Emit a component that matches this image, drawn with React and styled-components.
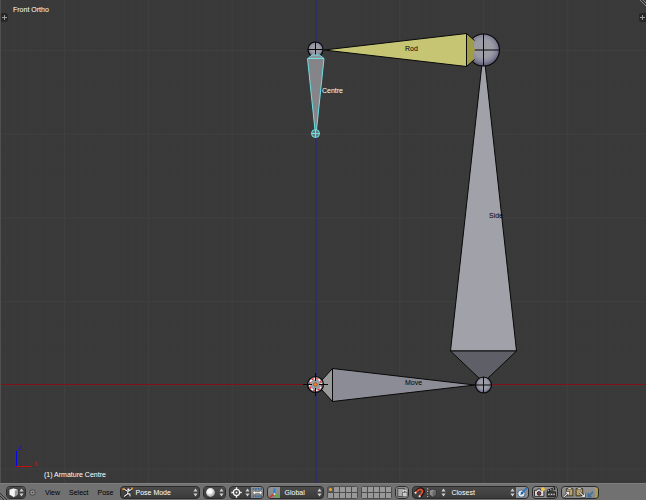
import React from 'react';
import styled, { createGlobalStyle, css } from 'styled-components';

const GlobalStyle = createGlobalStyle`
  * {
    box-sizing: border-box;
  }
  html, body, #root {
    height: 100%;
    margin: 0;
  }
  body {
    background: #393939;
    font-family: "Liberation Sans", Arial, sans-serif;
    font-size: 7px;
    line-height: 8px;
    overflow: hidden;
  }
  button, select {
    font: inherit;
  }
`;

const Editor = styled.div`
  display: flex;
  flex-direction: column;
  height: 100%;
`;

const Viewport = styled.main`
  position: relative;
  flex: 1;
  min-height: 0;
  border-left: 1px solid #505050;
`;

const Scene = styled.svg`
  display: block;
  width: 100%;
  height: 100%;

  text {
    font-size: 7px;
  }
`;

const Overlay = styled.div`
  position: absolute;
  left: ${(p) => p.$left}px;
  ${(p) => (p.$bottom ? 'bottom: 4px;' : 'top: 6px;')}
  color: #fff;
`;

const RegionTab = styled.button`
  position: absolute;
  top: 13px;
  ${(p) => p.$side}: 0;
  display: flex;
  align-items: center;
  justify-content: center;
  width: 7px;
  height: 9px;
  padding: 0;
  border: none;
  border-radius: ${(p) => (p.$side === 'left' ? '0 3px 3px 0' : '3px 0 0 3px')};
  background: #262626;
`;

const CornerGrip = styled.svg`
  position: absolute;
  top: 0;
  right: 0;
`;

const Header = styled.header`
  position: relative;
  display: flex;
  align-items: center;
  gap: 3px;
  height: 17px;
  padding: 1px 6px 0;
  border-top: 1px solid #7f7f7f;
  background: #717171;
`;

const HeaderGrip = styled.svg`
  position: absolute;
  left: 0;
  bottom: 0;
`;

const Menus = styled.nav`
  display: flex;
  align-items: center;
  gap: 9px;
  margin-right: 4px;
`;

const MenuButton = styled.button`
  display: flex;
  padding: 0;
  border: none;
  background: none;
  color: #000;
`;

const Group = styled.div`
  display: flex;
  flex-shrink: 0;
  height: 13px;
  border: 1px solid #2b2b2b;
  border-radius: 4px;
  overflow: hidden;
  background: #2b2b2b;
`;

const dark = css`
  background: linear-gradient(#4b4b4b, #3b3b3b);
`;

const light = css`
  background: linear-gradient(#939393, #858585);
`;

const IconButton = styled.button`
  display: flex;
  align-items: center;
  justify-content: ${(p) => (p.$menu ? 'space-between' : 'center')};
  width: ${(p) => p.$width || 12}px;
  height: 11px;
  padding: 0 ${(p) => (p.$menu ? 1 : 0)}px;
  border: none;
  ${(p) => (p.$light ? light : dark)}

  svg {
    flex-shrink: 0;
  }
`;

const SelectBox = styled.label`
  display: flex;
  align-items: center;
  position: relative;
  width: ${(p) => p.$width}px;
  height: 11px;
  ${dark}
`;

const Select = styled.select`
  appearance: none;
  width: 100%;
  height: 11px;
  padding: 0 8px 0 ${(p) => p.$indent || 4}px;
  border: none;
  outline: none;
  background: none;
  color: #fff;
`;

const SelectIcon = styled.span`
  position: absolute;
  left: 1px;
  top: 0;
  pointer-events: none;
`;

const SelectArrows = styled.span`
  position: absolute;
  right: 1px;
  top: 0;
  display: flex;
  align-items: center;
  height: 11px;
  pointer-events: none;
`;

const Layers = styled.div`
  display: grid;
  grid-template-columns: repeat(5, 5px);
  grid-auto-rows: 5px;
  gap: 1px;
  padding: 1px;
  border-radius: 3px;
  overflow: hidden;
  background: #4d4d4d;
`;

const Layer = styled.button`
  display: flex;
  padding: 1px;
  border: none;
  background: ${(p) => (p.$active ? '#5c5c5c' : '#999')};
`;

const LayerDot = styled.span`
  width: 3px;
  height: 3px;
  border-radius: 2px;
  background: #f2a531;
`;

const Arrows = () => (
  <svg width="5" height="9" viewBox="0 0 5 9" fill="#cfcfcf">
    <path d="M2.5 0.5L4.6 3.6H0.4zM2.5 8.5L0.4 5.4h4.2z" />
  </svg>
);

const Icon = ({ children, size = 11 }) => (
  <svg width={size} height={size} viewBox="0 0 10 10" fill="none">
    {children}
  </svg>
);

const CubeIcon = () => (
  <Icon>
    <path d="M1 2.2L5 1l4 1.2v4.6L5.2 9.5 1 7z" fill="#f4f4f4" stroke="#222" strokeWidth=".5" />
    <path d="M6.2 3.5L9 2.4v4.4L6.2 8.8z" fill="#999" />
  </Icon>
);

const PoseIcon = () => (
  <svg width="12" height="11" viewBox="0 0 12 11" fill="none">
    <path d="M2 2l3 2h2l3-2M6 4.5L5.5 7 2 9.6M5.8 6.6L8 7v2.6" stroke="#111" strokeWidth="2.4" />
    <path d="M2 2l3 2h2l3-2M6 4.5L5.5 7 2 9.6M5.8 6.6L8 7v2.6" stroke="#eee" strokeWidth="1.2" />
    <circle cx="6.4" cy="2.6" r="1.1" fill="#fff" />
    <path d="M0.5 1h2v2h-2zM9 .5h2v2H9z" fill="#f08a24" />
  </svg>
);

const ShadingIcon = () => (
  <Icon>
    <circle cx="5" cy="5" r="4" fill="url(#solid)" />
  </Icon>
);

const PivotIcon = () => (
  <Icon>
    <circle cx="5" cy="5" r="2.8" stroke="#f5f5f5" strokeWidth="1.1" />
    <path d="M5 .3v2.4M5 7.3v2.4M.3 5h2.4M7.3 5h2.4" stroke="#f5f5f5" strokeWidth="1.3" />
    <circle cx="5" cy="5" r=".8" fill="#fff" />
  </Icon>
);

const CentersIcon = () => (
  <Icon>
    <path d="M.5 1.8h9M.5 8.5h9" stroke="#30679f" strokeWidth="1.6" strokeDasharray="1.4 1" />
    <path d="M.6 5.2L3 2.9v1.5h4V2.9l2.4 2.3L7 7.5V6H3v1.5z" fill="#fff" stroke="#333" strokeWidth=".4" />
  </Icon>
);

const AxesIcon = () => (
  <svg width="11" height="10" viewBox="0 0 11 10" fill="none" strokeWidth="1.6">
    <path d="M5.5 .5v5.5" stroke="#2c7fd8" strokeWidth="2" />
    <path d="M5.5 6L1 9" stroke="#d33a25" />
    <path d="M5.5 6L10 9" stroke="#54b52a" />
    <circle cx="5.5" cy="6" r="1" fill="#ddd" />
  </svg>
);

const LockIcon = () => (
  <Icon>
    <path d="M.7 1.3h6v7.4h-6z" fill="#aaa" stroke="#333" strokeWidth=".7" />
    <path d="M5.8 5V3.6q1.5-1.4 2.6 0V5" stroke="#ddd" />
    <path d="M5 4.8h4.3v4H5z" fill="#ccc" stroke="#333" strokeWidth=".5" />
  </Icon>
);

const MagnetIcon = () => (
  <Icon>
    <path d="M1 5.2L4 2.4c3-2.2 5.8 1 3.6 3.6L5.2 9" stroke="#201010" strokeWidth="2.7" />
    <path d="M1.3 5.3L4 2.8c2.5-1.8 4.8.5 3 2.8L5 8.5" stroke="#db5132" strokeWidth="1.6" />
    <path d="M.8 5.7l1.2-1M4.6 9l.9-1.2" stroke="#eee" strokeWidth="1.8" />
  </Icon>
);

const SnapIcon = () => (
  <Icon>
    <path d="M3 3l3-1 3 1v4L6 9 3 7z" fill="#8c8c8c" stroke="#252525" strokeWidth=".5" />
    <path d="M1.5 1.2v8" stroke="#bbb" strokeDasharray="1 1.3" />
    <path d="M6 4.3l3-1.2V7L6 8.7z" fill="#666" />
  </Icon>
);

const TargetIcon = () => (
  <Icon>
    <circle cx="4" cy="6" r="3.3" fill="#e4ecf4" stroke="#40658c" strokeWidth=".8" />
    <path d="M4 6l5-5.2" stroke="#2f77bd" strokeWidth="1.8" />
    <path d="M3 7.2l1-3 2 2z" fill="#285b90" />
  </Icon>
);

const CameraIcon = () => (
  <Icon>
    <path d="M.5 3h2l.6-1.2h2.6L6.2 3H9v5.5H.5z" fill="#ddd" stroke="#222" strokeWidth=".8" />
    <circle cx="4.6" cy="5.8" r="1.7" fill="#834" stroke="#222" strokeWidth=".8" />
    <circle cx="8.1" cy="2" r="1.7" fill="#f7c53b" />
  </Icon>
);

const ClapperIcon = () => (
  <Icon>
    <path d="M1 4.4h7.7V9H1z" fill="#444" stroke="#1b1b1b" strokeWidth=".8" />
    <path d="M1 3.8L8.5 1.2" stroke="#1b1b1b" strokeWidth="2.3" />
    <path d="M1.5 3.6l7-2.4M2 6.7h6" stroke="#ccc" strokeWidth="1" strokeDasharray="1.3 1.1" />
  </Icon>
);

const ClipboardIcon = ({ flip }) => (
  <Icon>
    <path d={flip ? 'M1 1.5h6V8H1z' : 'M3 1.5h6V8H3z'} fill="#b8a069" stroke="#382d18" strokeWidth=".8" />
    <path d={flip ? 'M2.500 .6h3v1.7h-3z' : 'M4.500 .6h3v1.7h-3z'} fill="#ddd" stroke="#333" strokeWidth=".4" />
    <path d={flip ? 'M4 4.5l4.2 4M8.5 5.8v3h-3' : 'M.6 9.2L5 5M2.7 4.8h2.6v2.6'} stroke="#222" strokeWidth="2" />
    <path d={flip ? 'M4 4.5l4.2 4M8.5 5.8v3h-3' : 'M.6 9.2L5 5M2.7 4.8h2.6v2.6'} stroke="#eee" />
  </Icon>
);

const FlipIcon = () => (
  <Icon>
    <path d="M1.2 8.8l4.3-4.5M1.2 5.5v3.3h3" stroke="#3f709c" strokeWidth="1.4" />
    <path d="M8.4 1v8.5" stroke="#c6a92f" strokeWidth="1.8" strokeDasharray="1.5 .8" />
  </Icon>
);

function Joint({ x, y, r, cross = true }) {
  return (
    <g stroke="#080808">
      <circle cx={x} cy={y} r={r} fill="url(#joint)" strokeWidth="1.2" />
      {cross && <path d={`M${x - r} ${y}h${2 * r}M${x} ${y - r}v${2 * r}`} strokeWidth="1" />}
    </g>
  );
}

// one grid unit is 84px, split in ten
function Armature() {
  return (
    <Scene viewBox="1 0 645 483" preserveAspectRatio="xMidYMid slice" role="img" aria-label="Armature">
      <defs>
        <radialGradient id="joint" cx=".5" cy=".45" r=".55">
          <stop offset="0" stopColor="#9b9ba2" />
          <stop offset=".5" stopColor="#9c9ca6" />
          <stop offset=".75" stopColor="#85859a" />
          <stop offset="1" stopColor="#55556a" />
        </radialGradient>
        <radialGradient id="solid" cx=".4" cy=".35" r=".7">
          <stop offset=".3" stopColor="#fff" />
          <stop offset="1" stopColor="#999" />
        </radialGradient>
        <pattern id="minor" x="64" y="50" width="8.38" height="8.38" patternUnits="userSpaceOnUse">
          <path d="M.5 0v8.38M0 .5h8.38" stroke="#3a3a3a" />
        </pattern>
        <pattern id="major" x="64" y="50" width="83.8" height="83.7" patternUnits="userSpaceOnUse">
          <path d="M.5 0v84M0 .5h84" stroke="#3f3f3f" />
        </pattern>
      </defs>
      <rect width="646" height="484" fill="#393939" />
      <rect width="646" height="484" fill="url(#minor)" />
      <rect width="646" height="484" fill="url(#major)" />
      <path d="M0 384.5h646" stroke="#7e1216" />
      <path d="M316 0v484" stroke="#23238a" />

      {/* Side */}
      <g stroke="#080808" strokeLinejoin="round">
        <path d="M483.5 50L450.5 351h66z" fill="#a1a1aa" />
        <path d="M450.5 351h66L486 380h-5z" fill="#5f5f68" />
      </g>
      <Joint x={483.5} y={50} r={16} />
      <Joint x={483.5} y={385} r={8} />

      {/* Rod */}
      <g stroke="#080808" strokeLinejoin="round">
        <path d="M324 50l142.5-16.5v33z" fill="#c5c573" />
        <path d="M466.5 33.5l8 7-1 4 1.500 5.5-1.500 5 1 4-8 7.5z" fill="#a19d47" stroke="none" />
        <path d="M474.5 40.5l-8-7v33l8-7" fill="none" />
      </g>

      {/* Move */}
      <g stroke="#080808" strokeLinejoin="round">
        <path d="M332.5 368.5v33L475 385z" fill="#8c8c96" />
        <path d="M332.5 368.5l-11 12v9l11 12z" fill="#999" />
      </g>

      {/* Centre */}
      <Joint x={315.5} y={49.5} r={7.5} />
      <g stroke="#6edfe2" strokeLinejoin="round">
        <path d="M308 58.5l4-3.5h7.5l4.5 3.5z" fill="#8d9297" />
        <path d="M307.5 58.5H324L316.5 130h-1.5z" fill="#858589" />
        <circle cx="315.5" cy="133.5" r="4" fill="#607b7e" />
        <path d="M311.5 133.5h8M315.5 129.5v8" />
      </g>

      {/* 3D cursor on the root joint */}
      <Joint x={315.5} y={384.5} r={8} cross={false} />
      <circle cx="315.5" cy="384.5" r="6" fill="none" stroke="#fff" strokeWidth="1.3" />
      <circle cx="315.5" cy="384.5" r="6" fill="none" stroke="#e02a20" strokeWidth="1.3" strokeDasharray="2.35" />
      <path d="M303 384.5h9M319 384.5h9M315.5 373v8M315.5 388v8" stroke="#080808" />
      <circle cx="315.5" cy="384.5" r="1.8" fill="#f08a24" stroke="#59300c" strokeWidth=".5" />

      <text x="405" y="51">Rod</text>
      <text x="322" y="93" fill="#fff">Centre</text>
      <text x="489" y="218">Side</text>
      <text x="405" y="385">Move</text>

      <path d="M16.5 467.5V451" stroke="#0505e0" />
      <path d="M16 466.500h16" stroke="#c01010" />
      <text x="18" y="450" fill="#1515d8">z</text>
      <text x="34" y="466" fill="#d01010">x</text>
    </Scene>
  );
}

const Plus = () => (
  <svg width="5" height="5" viewBox="0 0 5 5" stroke="#9a9a9a">
    <path d="M2.5 0v5M0 2.5h5" />
  </svg>
);

function Dropdown({ label, value, width, icon, indent }) {
  return (
    <SelectBox $width={width}>
      {icon && <SelectIcon>{icon}</SelectIcon>}
      <Select aria-label={label} $indent={indent} defaultValue={value}>
        <option>{value}</option>
      </Select>
      <SelectArrows><Arrows /></SelectArrows>
    </SelectBox>
  );
}

function LayerGrid({ active, start }) {
  return (
    <Layers>
      {Array.from({ length: 10 }, (_, i) => (
        <Layer key={i} aria-label={`Layer ${start + i}`} $active={i === active}>
          {i === active && <LayerDot />}
        </Layer>
      ))}
    </Layers>
  );
}

function App() {
  return (
    <Editor>
      <GlobalStyle />
      <Viewport>
        <Armature />
        <Overlay $left={12}>Front Ortho</Overlay>
        <Overlay $left={43} $bottom>(1) Armature Centre</Overlay>
        <RegionTab $side="left" aria-label="Show tools"><Plus /></RegionTab>
        <RegionTab $side="right" aria-label="Show properties"><Plus /></RegionTab>
        <CornerGrip width="7" height="7" stroke="#858585">
          <path d="M1 0l6 6M4 0l3 3" />
        </CornerGrip>
      </Viewport>
      <Header>
        <Group>
          <IconButton $menu $width={18} aria-label="Editor type"><CubeIcon /><Arrows /></IconButton>
        </Group>
        <Menus>
          <MenuButton aria-label="Collapse menus">
            <svg width="7" height="7" viewBox="0 0 7 7" fill="none" stroke="#303030">
              <circle cx="3.5" cy="3.5" r="2.7" fill="#999" strokeWidth=".8" />
              <circle cx="3.5" cy="3.5" r=".5" />
            </svg>
          </MenuButton>
          <MenuButton>View</MenuButton>
          <MenuButton>Select</MenuButton>
          <MenuButton>Pose</MenuButton>
        </Menus>
        <Group>
          <Dropdown label="Mode" value="Pose Mode" width={78} icon={<PoseIcon />} indent={14} />
        </Group>
        <Group>
          <IconButton $menu $width={21} aria-label="Viewport shading"><ShadingIcon /><Arrows /></IconButton>
        </Group>
        <Group>
          <IconButton $menu $width={21} aria-label="Pivot point"><PivotIcon /><Arrows /></IconButton>
          <IconButton $light aria-label="Manipulate centre points"><CentersIcon /></IconButton>
        </Group>
        <Group>
          <IconButton $light $width={12} aria-label="Manipulator"><AxesIcon /></IconButton>
          <Dropdown label="Orientation" value="Global" width={43} />
        </Group>
        <LayerGrid active={0} start={1} />
        <LayerGrid start={11} />
        <Group>
          <IconButton $light aria-label="Lock to scene"><LockIcon /></IconButton>
        </Group>
        <Group>
          <IconButton aria-label="Snap"><MagnetIcon /></IconButton>
          <IconButton $menu $width={22} aria-label="Snap element"><SnapIcon /><Arrows /></IconButton>
          <Dropdown label="Snap target" value="Closest" width={69} />
          <IconButton $light aria-label="Align rotation"><TargetIcon /></IconButton>
        </Group>
        <Group>
          <IconButton $light aria-label="Render image"><CameraIcon /></IconButton>
          <IconButton $light aria-label="Render animation"><ClapperIcon /></IconButton>
        </Group>
        <Group>
          <IconButton $light aria-label="Copy pose"><ClipboardIcon /></IconButton>
          <IconButton $light aria-label="Paste pose"><ClipboardIcon flip /></IconButton>
          <IconButton $light aria-label="Paste flipped pose"><FlipIcon /></IconButton>
        </Group>
        <HeaderGrip width="7" height="9" stroke="#303030">
          <path d="M0 2l7 7M0 5l4 4" />
        </HeaderGrip>
      </Header>
    </Editor>
  );
}

export default App;
